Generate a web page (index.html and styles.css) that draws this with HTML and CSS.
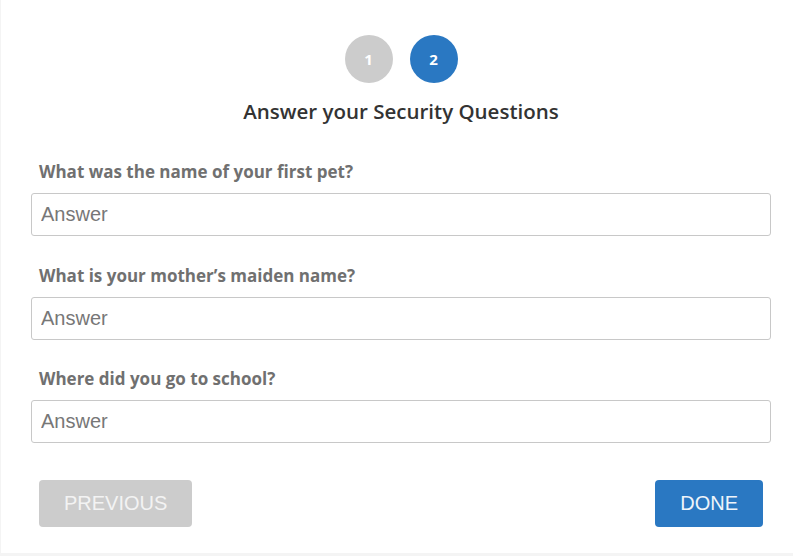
FILE: index.html
```html
<!DOCTYPE html>
<html>
<head>
<meta charset="utf-8">
<link rel="stylesheet" href="styles.css">
</head>
<body>
<div class="card">
  <div class="steps">
    <span class="step step-done">1</span>
    <span class="step step-active">2</span>
  </div>
  <h1 class="title">Answer your Security Questions</h1>
  <form class="form">
    <div class="field">
      <label class="label">What was the name of your first pet?</label>
      <input class="input" type="text" placeholder="Answer">
    </div>
    <div class="field">
      <label class="label">What is your mother’s maiden name?</label>
      <input class="input" type="text" placeholder="Answer">
    </div>
    <div class="field">
      <label class="label">Where did you go to school?</label>
      <input class="input" type="text" placeholder="Answer">
    </div>
    <div class="actions">
      <button type="button" class="btn btn-prev">PREVIOUS</button>
      <button type="button" class="btn btn-done">DONE</button>
    </div>
  </form>
</div>
</body>
</html>
```
FILE: styles.css
```css
html, body {
  margin: 0;
  padding: 0;
  background: #f4f4f4;
}
.card {
  background: #fff;
  margin-left: 1px;
  height: 553px;
  box-sizing: border-box;
  padding: 35px 22px 0 30px;
  font-family: "Open Sans", "Liberation Sans", sans-serif;
}
.steps {
  display: flex;
  justify-content: center;
  gap: 17px;
}
.step {
  width: 48px;
  height: 48px;
  border-radius: 50%;
  display: flex;
  align-items: center;
  justify-content: center;
  color: #fff;
  font-weight: 700;
  font-size: 15px;
}
.step-done { background: #cccccc; }
.step-active { background: #2a78c2; }
.title {
  margin: 14px 0 0;
  text-align: center;
  font-size: 20.5px;
  line-height: 28px;
  font-weight: 600;
  color: #333;
}
.form {
  margin-top: 36px;
}
.field {
  display: flex;
  flex-direction: column;
  margin-bottom: 28.5px;
}
.label {
  font-size: 17px;
  line-height: 22px;
  font-weight: 700;
  color: #707070;
  padding-left: 8px;
  margin-bottom: 10px;
}
.input {
  height: 43px;
  box-sizing: border-box;
  border: 1px solid #c8c8c8;
  border-radius: 3px;
  padding: 0 9px;
  font-family: "Liberation Sans", Arial, sans-serif;
  font-size: 20px;
  color: #333;
  outline: none;
}
.input::placeholder { color: #777; }
.actions {
  display: flex;
  justify-content: space-between;
  padding: 8.5px 8px 0;
}
.btn {
  height: 47px;
  border: none;
  border-radius: 4px;
  padding: 0 25px;
  font-family: "Liberation Sans", Arial, sans-serif;
  font-size: 20px;
  cursor: pointer;
}
.btn-prev { background: #cccccc; color: #f3f3f3; }
.btn-done { background: #2a78c2; color: #eef4fa; }
```
